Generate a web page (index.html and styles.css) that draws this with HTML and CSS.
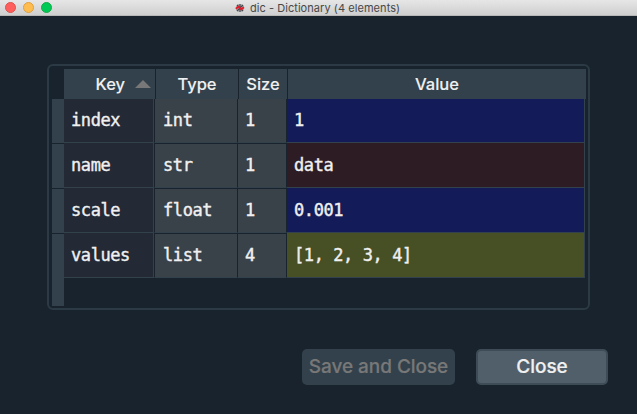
FILE: index.html
```html
<!DOCTYPE html>
<html lang="en">
<head>
<meta charset="utf-8">
<title>dic - Dictionary (4 elements)</title>
<link rel="stylesheet" href="styles.css">
</head>
<body>
<header class="titlebar">
  <div class="lights"><i class="red"></i><i class="amber"></i><i class="green"></i></div>
  <div class="title">
    <svg class="logo" viewBox="0 0 10 10"><circle cx="5" cy="5" r="4.1" fill="#a5a8aa"/><path d="M2 2l6 6M8 2L2 8M5 .9v8.2" stroke="#45494c" stroke-width="1.1"/><path d="M.8 5.8L3.4 3.7 6.2 6.3 9 4.2" fill="none" stroke="#e51b2c" stroke-width="1.8"/></svg>
    <span>dic - Dictionary (4 elements)</span>
  </div>
</header>
<main>
  <section class="frame">
    <div class="head">
      <div class="key"><span>Key</span><svg class="sort" viewBox="0 0 16 8"><path d="M0 8L8 0l8 8z"/></svg></div>
      <div>Type</div><div>Size</div><div>Value</div>
    </div>
    <div class="body">
      <div class="rows-head"><i></i><i></i><i></i><i></i></div>
      <div class="rows">
        <div class="row"><span class="name">index</span><span class="meta">int</span><span class="meta size">1</span><span class="value number">1</span></div>
        <div class="row"><span class="name">name</span><span class="meta">str</span><span class="meta size">1</span><span class="value string">data</span></div>
        <div class="row"><span class="name">scale</span><span class="meta">float</span><span class="meta size">1</span><span class="value number">0.001</span></div>
        <div class="row"><span class="name">values</span><span class="meta">list</span><span class="meta size">4</span><span class="value list">[1, 2, 3, 4]</span></div>
      </div>
    </div>
  </section>
  <footer><button class="save" disabled>Save and Close</button><button class="close">Close</button></footer>
</main>
</body>
</html>
```
FILE: styles.css
```css
* { box-sizing: border-box; }
body { margin: 0; width: 637px; height: 414px; overflow: hidden; background: #19232d; color: #f0f0f0; font-family: Inter, "Liberation Sans", sans-serif; }
.titlebar { height: 16px; display: grid; grid-template-columns: 60px 1fr 60px; background: linear-gradient(#e6e6e6, #cfcfcf); border-bottom: 1px solid #b8b8b8; }
.lights { display: flex; gap: 7px; padding: 2px 0 0 5px; }
.lights i { width: 11px; height: 11px; border-radius: 50%; border: 1px solid; }
.lights .red { background: #ff5f5c; border-color: #e2504c; }
.lights .amber { background: #ffbd4f; border-color: #dfa03d; }
.lights .green { background: #00ca56; border-color: #12ac48; }
.title { display: flex; justify-content: center; align-items: center; gap: 5px; padding-right: 2px; height: 15px; color: #484848; font-size: 11px; line-height: 15px; letter-spacing: .06px; white-space: nowrap; }
.title span { padding-top: 1px; }
.logo { width: 10px; height: 10px; }
main { padding: 48px 29px 0 47px; }
.frame { width: 543px; height: 246px; border: 2px solid #2b3a44; border-radius: 6px; padding: 3px 2px 2px 3px; }
.head { display: grid; grid-template-columns: 91px 83px 49px 299px; height: 30px; margin-left: 12px; width: 522px; }
.head > div { display: flex; align-items: center; justify-content: center; background: #32414b; border-left: 1px solid #19232d; font-size: 16.5px; font-weight: 500; -webkit-text-stroke: .1px #f0f0f0; }
.head > .key { border-left: 0; justify-content: flex-end; gap: 10px; padding-right: 4px; }
.sort { width: 16px; height: 8px; fill: #787878; }
.body { display: flex; height: 207px; }
.rows-head { width: 12px; background: #32414b; }
.rows-head i { display: block; height: 45px; border-bottom: 1px solid #19232d; }
.rows-head i:last-child { border: 0; }
.row { display: grid; grid-template-columns: 90px 83px 49px 299px; height: 45px; font: 17px/44px "DejaVu Sans Mono", monospace; letter-spacing: -.42px; -webkit-text-stroke: .4px #f0f0f0; }
.row:first-child { height: 44px; line-height: 42px; }
.row > span { border-bottom: 1px solid #32414b; padding-left: 7px; white-space: pre; }
.row .name { background: #232935; border-right: 1px solid #32414b; }
.row .meta { background: #3a4249; border-left: 1px solid #19232d; padding-left: 8px; }
.row .size { padding-left: 7px; }
.row + .row .meta { border-top: 1px solid #19232d; line-height: 42px; }
.row .value { border-left: 1px solid #19232d; border-right: 1px solid #32414b; }
.number { background: #141b59; }
.string { background: #2e1c25; }
.list { background: #474f25; }
footer { display: flex; justify-content: flex-end; gap: 21px; margin-top: 39px; }
button { height: 36px; padding: 0; border: 0; border-radius: 5px; font: 500 19px/36px Inter, sans-serif; letter-spacing: -.05px; }
.save { width: 153px; background: #32414b; color: #787878; -webkit-text-stroke: .2px #787878; }
.close { width: 132px; background: #505f69; border: 2px solid #3d4c56; color: #f0f0f0; line-height: 32px; -webkit-text-stroke: .2px #f0f0f0; }
```
